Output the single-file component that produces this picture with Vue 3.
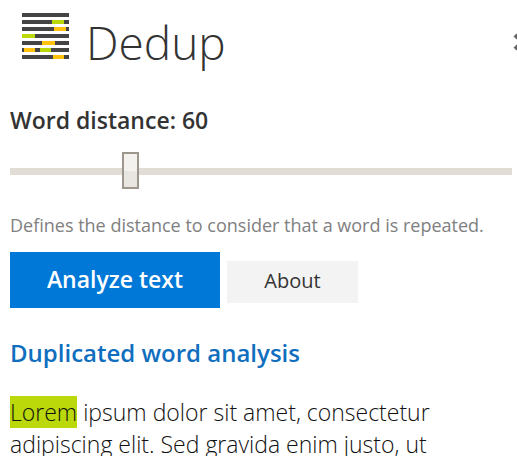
<template>
    <div class="pane">
        <header class="header">
            <svg class="logo" viewBox="0 0 48 48" aria-hidden="true">
                <g fill="#444444">
                    <rect v-for="n in 7" :key="n" x="0" :y="(n - 1) * 7 + 1" width="47" height="4" />
                </g>
                <rect v-for="(mark, index) in marks" :key="index" :x="mark.x" :y="mark.row * 7 + 1" :width="mark.width"
                    height="4" :fill="mark.color" />
            </svg>
            <h1>Dedup</h1>
            <button type="button" class="close" aria-label="Close">
                <svg viewBox="0 0 20 20" aria-hidden="true">
                    <path d="M3 3 L17 17 M17 3 L3 17" fill="none" stroke="#666666" stroke-width="4" />
                </svg>
            </button>
        </header>

        <main>
            <form @submit.prevent="analyze">
                <label for="distance">Word distance: {{ distance }}</label>
                <input type="range" id="distance" v-model.number="distance" min="30" max="160"
                    aria-describedby="distance-help" />
                <p id="distance-help" class="help">Defines the distance to consider that a word is repeated.</p>

                <div class="actions">
                    <button type="submit" class="primary">Analyze text</button>
                    <button type="button" class="secondary">About</button>
                </div>
            </form>

            <h2>Duplicated word analysis</h2>
            <p class="result">
                <template v-for="(word, index) in words" :key="index">
                    <mark v-if="duplicated.includes(word)">{{ word }}</mark>
                    <template v-else>{{ word }}</template>
                    {{ ' ' }}
                </template>
            </p>
        </main>
    </div>
</template>

<script setup>
import { ref } from 'vue'

const green = '#bad80a'
const yellow = '#ffc20e'

const marks = [
    { row: 1, x: 30, width: 12, color: green },
    { row: 2, x: 32, width: 12, color: yellow },
    { row: 3, x: 0, width: 13, color: green },
    { row: 4, x: 20, width: 13, color: yellow },
    { row: 5, x: 2, width: 11, color: yellow },
    { row: 5, x: 18, width: 11, color: green },
    { row: 6, x: 31, width: 11, color: yellow }
]

const distance = ref(60)
const text = 'Lorem ipsum dolor sit amet, consectetur adipiscing elit. Sed gravida enim justo, ut'
const words = ref(text.split(' '))
const duplicated = ref(['Lorem'])

function analyze() {
    words.value = text.split(' ')
}
</script>

<style>
body {
    margin: 0;
    background: #ffffff;
}
</style>

<style scoped>
.pane {
    box-sizing: border-box;
    height: 100vh;
    padding: 12px 5px 0 10px;
    overflow: hidden;
    font-family: 'Segoe UI', 'Open Sans', sans-serif;
    color: #333333;
}

.header {
    display: flex;
    align-items: flex-start;
    height: 60px;
    padding-left: 12px;
}

.logo {
    width: 48px;
    height: 48px;
}

h1 {
    margin: 0 0 0 16px;
    font-size: 46px;
    font-weight: 300;
    line-height: 60px;
}

.close {
    flex: none;
    width: 20px;
    height: 20px;
    margin: 20px -20px 0 auto;
    padding: 0;
    border: none;
    background: none;
}

.close svg {
    display: block;
}

label {
    display: block;
    margin-top: 32px;
    font-size: 23px;
    font-weight: 600;
    line-height: 32px;
}

input {
    display: block;
    width: 100%;
    height: 38px;
    margin: 16px 0 0;
    background: none;
    appearance: none;
}

input::-webkit-slider-runnable-track {
    height: 7px;
    background: #e1ddd6;
}

input::-webkit-slider-thumb {
    box-sizing: border-box;
    width: 17px;
    height: 37px;
    margin-top: -16px;
    border: 2px solid #9d968d;
    background: linear-gradient(#f3f2ef 50%, #e9e5e1 50%);
    appearance: none;
}

.help {
    margin: 23px 0 0;
    font-size: 18px;
    line-height: 24px;
    color: #808080;
    white-space: nowrap;
}

.actions {
    display: flex;
    align-items: center;
    gap: 7px;
    margin-top: 15px;
}

.actions button {
    border: none;
    font-family: inherit;
    cursor: pointer;
}

.primary {
    width: 210px;
    height: 56px;
    padding: 0 0 3px;
    background: #0078d7;
    color: #ffffff;
    font-size: 23px;
    font-weight: 600;
}

.secondary {
    width: 131px;
    height: 42px;
    margin-top: 4px;
    padding: 0 0 3px;
    background: #f3f3f3;
    color: #333333;
    font-size: 20px;
}

h2 {
    margin: 29px 0 0;
    font-size: 24px;
    font-weight: 600;
    line-height: 32px;
    color: #106ebe;
}

.result {
    margin: 27px 0 0;
    font-size: 23px;
    font-weight: 300;
    line-height: 32px;
    color: #111111;
}

mark {
    background: #bad80a;
    color: inherit;
}
</style>
